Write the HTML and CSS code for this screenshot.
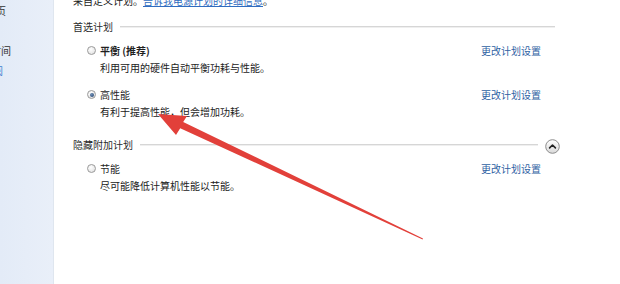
FILE: index.html
```
<!DOCTYPE html>
<html lang="zh-CN">
<head>
<meta charset="utf-8">
<link rel="stylesheet" href="styles.css">
</head>
<body>
<div class="window">
  <aside class="sidebar">
    <div class="side-item side-item-top"><span>控制面板主页</span></div>
    <div class="side-item side-item-mid"><span>更改计算机睡眠时间</span></div>
    <div class="side-item side-item-link"><span>另请参阅</span></div>
  </aside>
  <main class="content">
    <p class="intro">来自定义计划。<a href="#" class="intro-link">告诉我电源计划的详细信息</a>。</p>

    <section class="group">
      <div class="group-head">
        <span class="group-label">首选计划</span>
        <span class="rule rule-first"></span>
      </div>
      <div class="plan">
        <span class="radio"></span>
        <div class="plan-body">
          <div class="plan-title plan-title-bold">平衡 (推荐)</div>
          <div class="plan-desc">利用可用的硬件自动平衡功耗与性能。</div>
        </div>
        <a href="#" class="plan-link">更改计划设置</a>
      </div>
      <div class="plan plan-second">
        <span class="radio radio-on"></span>
        <div class="plan-body">
          <div class="plan-title">高性能</div>
          <div class="plan-desc">有利于提高性能，但会增加功耗。</div>
        </div>
        <a href="#" class="plan-link">更改计划设置</a>
      </div>
    </section>

    <section class="group group-hidden">
      <div class="group-head">
        <span class="group-label">隐藏附加计划</span>
        <span class="rule"></span>
        <span class="toggle">
          <svg width="15" height="15" viewBox="0 0 15 15">
            <defs>
              <linearGradient id="tg" x1="0" y1="0" x2="0" y2="1">
                <stop offset="0" stop-color="#ffffff"/>
                <stop offset="1" stop-color="#d9d9d9"/>
              </linearGradient>
            </defs>
            <circle cx="7.5" cy="7.5" r="6.8" fill="url(#tg)" stroke="#8c8c8c" stroke-width="1"/>
            <path d="M4.6 8.9 L7.5 6 L10.4 8.9" fill="none" stroke="#222" stroke-width="1.6" stroke-linecap="round" stroke-linejoin="round"/>
          </svg>
        </span>
      </div>
      <div class="plan">
        <span class="radio"></span>
        <div class="plan-body">
          <div class="plan-title">节能</div>
          <div class="plan-desc">尽可能降低计算机性能以节能。</div>
        </div>
        <a href="#" class="plan-link">更改计划设置</a>
      </div>
    </section>
  </main>
  <svg class="arrow" width="620" height="284" viewBox="0 0 620 284">
    <polygon fill="#e2403a" points="158,114 187,116 183.2,122 423,238.4 422.6,239.6 180.2,128.2 176,135"/>
  </svg>
</div>
</body>
</html>
```

FILE: styles.css
```
* { box-sizing: border-box; }
html, body { margin: 0; padding: 0; }
body {
  width: 620px;
  height: 284px;
  overflow: hidden;
  background: #ffffff;
  font-family: "Noto Sans CJK SC", "Noto Sans", sans-serif;
  font-size: 10px;
  color: #222222;
}
.window {
  position: relative;
  display: flex;
  width: 620px;
  height: 284px;
  overflow: hidden;
}
.sidebar {
  width: 54px;
  flex: none;
  background: linear-gradient(to right, #e3ebf7, #e9eff9);
  border-right: 1px solid #dfe6ef;
  display: flex;
  flex-direction: column;
}
.side-item {
  width: 11px;
  display: flex;
  justify-content: flex-end;
  overflow: hidden;
  white-space: nowrap;
  font-size: 10px;
  line-height: 14px;
  color: #333333;
}
.side-item-top { width: 6px; margin-top: 4px; }
.side-item-mid { margin-top: 26px; }
.side-item-link { width: 3px; margin-top: 6px; color: #3f7fd0; }

.content {
  flex: 1;
  padding: 0 60px 0 19px;
}
.intro {
  margin: -6px 0 0 0;
  line-height: 14px;
  white-space: nowrap;
  color: #222222;
}
.intro-link { color: #2f6cc0; text-decoration: underline; }

.group { margin-top: 12px; }
.group-hidden { margin-top: 18px; }
.group-head {
  display: flex;
  align-items: center;
  height: 14px;
  line-height: 14px;
}
.group-label { color: #2a2a2a; white-space: nowrap; }
.rule {
  flex: 1;
  height: 1px;
  margin-left: 7px;
  background: #d6d6d6;
  border-bottom: 1px solid #efefef;
  box-sizing: content-box;
}
.rule-first { margin-right: 5px; }
.toggle {
  display: flex;
  width: 15px;
  height: 15px;
  margin-left: 7px;
  margin-top: 2px;
}

.plan {
  display: grid;
  grid-template-columns: 9px 1fr auto;
  column-gap: 4px;
  margin-top: 8px;
  padding: 0 19px 0 14px;
}
.plan-second { margin-top: 10px; }
.plan-body { line-height: 17px; }
.plan-title { color: #1f1f1f; }
.plan-title-bold { font-weight: bold; }
.plan-desc { color: #222222; }
.plan-link {
  color: #2f62a3;
  text-decoration: none;
  line-height: 17px;
}
.radio {
  width: 9px;
  height: 9px;
  margin-top: 4px;
  border-radius: 50%;
  border: 1px solid #9a9a9a;
  background: radial-gradient(circle at 40% 35%, #ffffff, #dcdcdc);
  position: relative;
}
.radio-on::after {
  content: "";
  position: absolute;
  left: 1.5px;
  top: 1.5px;
  width: 4px;
  height: 4px;
  border-radius: 50%;
  background: radial-gradient(circle at 40% 35%, #6f8fb8, #1f3d66);
}
.arrow {
  position: absolute;
  left: 0;
  top: 0;
  pointer-events: none;
}
```
